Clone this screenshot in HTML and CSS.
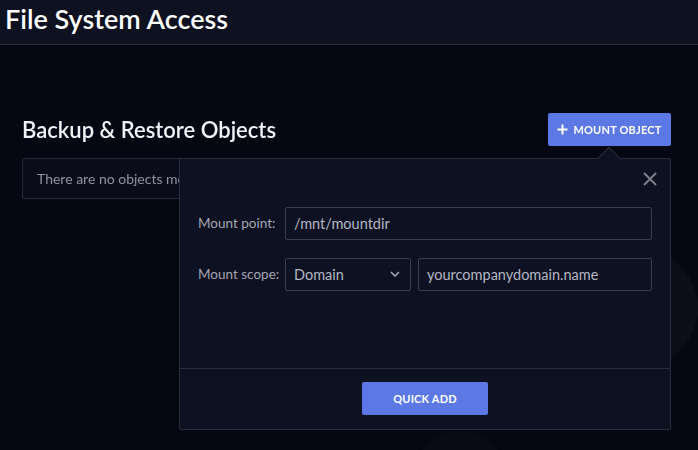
FILE: index.html
```html
<!DOCTYPE html>
<html>
<head>
<meta charset="utf-8">
<link rel="stylesheet" href="styles.css">
</head>
<body>
<div class="decor">
  <div class="bg-circle c1"></div>
  <div class="bg-circle c2"></div>
</div>
<header class="topbar"><h1>File System Access</h1></header>
<main class="content">
  <div class="section-head">
    <h2>Backup &amp; Restore Objects</h2>
    <div class="btn-wrap">
      <button class="btn primary mount"><svg width="11" height="11" viewBox="0 0 11 11"><path d="M5.5 0.5v10M0.5 5.5h10" stroke="#fff" stroke-width="2"/></svg>MOUNT OBJECT</button>
      <div class="popover">
        <div class="arrow"></div>
        <button class="close"><svg width="16" height="16" viewBox="0 0 16 16"><path d="M2 2L14 14M14 2L2 14" stroke="#80838d" stroke-width="1.8"/></svg></button>
        <div class="pop-body">
          <div class="row">
            <label>Mount point:</label>
            <div class="field grow">/mnt/mountdir</div>
          </div>
          <div class="row">
            <label>Mount scope:</label>
            <div class="field select">Domain<svg width="10" height="6" viewBox="0 0 10 6"><path d="M1 1l4 4 4-4" stroke="#a9acb6" stroke-width="1.5" fill="none"/></svg></div>
            <div class="field grow">yourcompanydomain.name</div>
          </div>
        </div>
        <div class="pop-foot">
          <button class="btn primary quick">QUICK ADD</button>
        </div>
      </div>
    </div>
  </div>
  <div class="empty">There are no objects mounted yet.</div>
</main>
</body>
</html>
```
FILE: styles.css
```css
* { box-sizing: border-box; }
html, body { margin: 0; height: 100%; overflow: hidden; }
body {
  background: #050812;
  font-family: "Source Sans Pro", Lato, "Noto Sans", sans-serif;
  color: #e6e8ef;
  position: relative;
}
.decor {
  position: fixed;
  inset: 0;
  overflow: hidden;
  pointer-events: none;
}
.bg-circle {
  position: absolute;
  border-radius: 50%;
  background: #0c0f19;
}
.c1 { left: 582px; top: 250px; width: 116px; height: 116px; }
.c2 { left: 412px; top: 431px; width: 96px; height: 96px; background: #080b16; }
.topbar {
  position: relative;
  height: 45px;
  background: #0e1120;
  border-bottom: 1px solid #2a2d3b;
  padding: 0 5px;
}
.topbar h1 {
  margin: 0;
  font-size: 27px;
  line-height: 38px;
  font-weight: 600;
  color: #ffffff;
}
.content {
  position: relative;
  padding: 67px 27px 0 22px;
}
.section-head {
  display: flex;
  justify-content: space-between;
  align-items: center;
  height: 34px;
}
.section-head h2 {
  margin: 0;
  font-size: 22px;
  font-weight: 600;
  color: #f2f3f7;
}
.btn-wrap { position: relative; }
.btn {
  border: 0;
  border-radius: 2px;
  font-family: inherit;
  cursor: pointer;
}
.primary {
  background: #5b78e4;
  color: #fff;
  font-weight: 700;
  font-size: 11px;
  letter-spacing: 0.2px;
}
.mount {
  height: 33px;
  width: 123px;
  display: flex;
  align-items: center;
  justify-content: center;
  gap: 5px;
  padding: 0;
}
.empty {
  margin-top: 12px;
  width: 300px;
  height: 41px;
  border: 1px solid #262937;
  background: #0a0d19;
  border-radius: 2px;
  padding: 0 14px;
  display: flex;
  align-items: center;
  font-size: 14px;
  color: #9093a0;
  white-space: nowrap;
  overflow: hidden;
}
.popover {
  position: absolute;
  right: 0;
  top: 45px;
  width: 492px;
  height: 272px;
  background: #0e1121;
  border: 1px solid #2a2d3b;
  border-radius: 2px;
  z-index: 5;
  display: flex;
  flex-direction: column;
}
.arrow {
  position: absolute;
  top: -9px;
  right: 53px;
  width: 16px;
  height: 16px;
  background: #0e1121;
  border-left: 1px solid #2a2d3b;
  border-top: 1px solid #2a2d3b;
  transform: rotate(45deg);
}
.close {
  position: absolute;
  top: 10px;
  right: 10px;
  background: none;
  border: 0;
  padding: 0;
  width: 20px;
  height: 20px;
  display: flex;
  align-items: center;
  justify-content: center;
}
.pop-body {
  flex: 1;
  padding: 48px 18px 0 18px;
  display: flex;
  flex-direction: column;
  gap: 18px;
}
.row {
  display: flex;
  align-items: center;
  gap: 7px;
}
.row label {
  width: 80px;
  font-size: 13.5px;
  color: #a3a6b2;
  white-space: nowrap;
}
.field {
  height: 33px;
  border: 1px solid #3a3d4b;
  border-radius: 2px;
  background: #0e1121;
  display: flex;
  align-items: center;
  padding: 0 8px;
  font-size: 14.5px;
  color: #b4b7c2;
}
.grow { flex: 1; }
.select {
  width: 126px;
  justify-content: space-between;
  padding-right: 10px;
}
.pop-foot {
  height: 61px;
  border-top: 1px solid #2a2d3b;
  display: flex;
  justify-content: center;
  align-items: center;
}
.quick {
  width: 126px;
  height: 33px;
  font-size: 11px;
}
```
